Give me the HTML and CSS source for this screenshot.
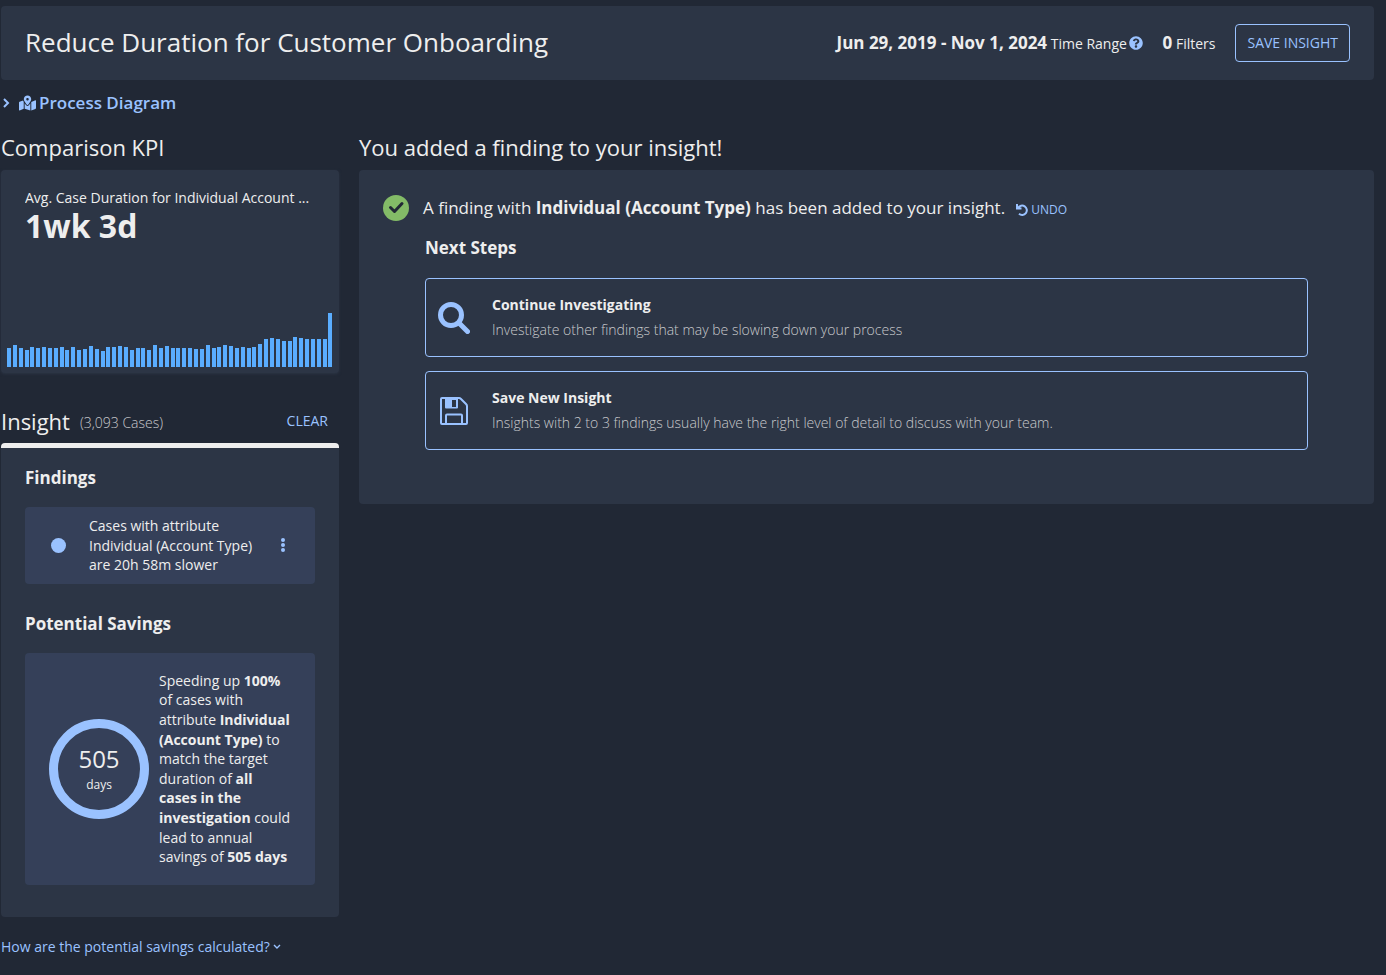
FILE: index.html
```html
<!DOCTYPE html>
<html lang="en">
<head>
<meta charset="utf-8">
<meta name="viewport" content="width=device-width, initial-scale=1">
<title>Reduce Duration for Customer Onboarding</title>
<link rel="stylesheet" href="styles.css">
</head>
<body>
<header class="topbar">
  <h1 class="topbar-title">Reduce Duration for Customer Onboarding</h1>
  <div class="topbar-meta">
    <div class="meta-item"><strong>Jun 29, 2019 - Nov 1, 2024</strong> Time Range
      <button class="icon-button help" type="button" aria-label="Time range help"><svg viewBox="0 0 512 512" width="14" height="14"><path d="M504 256c0 137-111 248-248 248S8 393 8 256 119 8 256 8s248 111 248 248zM262.700 90c-54.500 0-89.300 23-116.500 63.800-3.500 5.300-2.400 12.400 2.700 16.300l34.700 26.300c5.200 3.900 12.600 3 16.700-2.100 17.900-22.700 30.100-35.800 57.300-35.800 20.400 0 45.700 13.100 45.700 33 0 15-12.400 22.700-32.500 34C247.100 238.500 216 254.900 216 296v4c0 6.600 5.400 12 12 12h56c6.600 0 12-5.400 12-12v-1.300c0-28.500 83.200-29.600 83.200-106.700 0-58-60.200-102-116.500-102zM256 338c-25.400 0-46 20.600-46 46s20.600 46 46 46 46-20.600 46-46-20.600-46-46-46z"/></svg></button>
    </div>
    <div class="meta-item"><strong>0</strong> Filters</div>
    <button class="save-button" type="button">SAVE INSIGHT</button>
  </div>
</header>

<button class="process-toggle" type="button" aria-expanded="false">
  <svg class="chevron" viewBox="0 0 8 10" width="8" height="10"><path d="M2 1l4 4-4 4"/></svg>
  <svg class="map-icon" viewBox="0 0 576 512" width="17" height="16"><path d="M288 0c-69.600 0-126 56.400-126 126 0 56.300 82.400 158.800 113.900 196 6.400 7.500 17.800 7.500 24.200 0C331.600 284.800 414 182.300 414 126 414 56.400 357.600 0 288 0zm0 168c-23.200 0-42-18.800-42-42s18.800-42 42-42 42 18.800 42 42-18.800 42-42 42zM20.100 216A32 32 0 0 0 0 245.700v250.300c0 11.300 11.400 19.100 21.900 14.900L160 448V214.900c-8.800-16-16.100-31.500-21.300-46.400L20.100 216zM288 359.700c-14.100 0-27.400-6.200-36.500-17-19.700-23.200-40.600-49.600-59.500-76.700v182l192 64V266c-18.900 27.100-39.900 53.500-59.500 76.700-9.200 10.800-22.500 17-36.500 17zm266.100-198.500L416 224v288l139.900-56A32 32 0 0 0 576 426.300V176c0-11.300-11.400-19.100-21.900-14.800z"/></svg>
  <span>Process Diagram</span>
</button>

<div class="columns">
  <aside class="sidebar">
    <h2 class="section-title">Comparison KPI</h2>
    <section class="kpi-card">
      <div class="kpi-text">
        <div class="kpi-label">Avg. Case Duration for Individual Account ...</div>
        <div class="kpi-value">1wk 3d</div>
      </div>
      <div class="kpi-chart" role="img" aria-label="Average case duration over time">
        <i style="height:19px"></i><i style="height:22px"></i><i style="height:19px"></i><i style="height:17px"></i><i style="height:20px"></i><i style="height:19px"></i><i style="height:20px"></i><i style="height:19px"></i>
        <i style="height:19px"></i><i style="height:20px"></i><i style="height:17px"></i><i style="height:20px"></i><i style="height:17px"></i><i style="height:18px"></i><i style="height:21px"></i><i style="height:18px"></i>
        <i style="height:16px"></i><i style="height:20px"></i><i style="height:20px"></i><i style="height:21px"></i><i style="height:20px"></i><i style="height:17px"></i><i style="height:19px"></i><i style="height:19px"></i>
        <i style="height:17px"></i><i style="height:22px"></i><i style="height:19px"></i><i style="height:21px"></i><i style="height:19px"></i><i style="height:19px"></i><i style="height:19px"></i><i style="height:19px"></i>
        <i style="height:18px"></i><i style="height:18px"></i><i style="height:22px"></i><i style="height:19px"></i><i style="height:20px"></i><i style="height:22px"></i><i style="height:21px"></i><i style="height:19px"></i>
        <i style="height:20px"></i><i style="height:19px"></i><i style="height:20px"></i><i style="height:23px"></i><i style="height:28px"></i><i style="height:29px"></i><i style="height:28px"></i><i style="height:26px"></i>
        <i style="height:26px"></i><i style="height:30px"></i><i style="height:29px"></i><i style="height:28px"></i><i style="height:28px"></i><i style="height:28px"></i><i style="height:28px"></i><i style="height:54px"></i>
      </div>
    </section>

    <div class="insight-head">
      <h2 class="section-title">Insight</h2>
      <span class="case-count">(3,093 Cases)</span>
      <button class="clear-button" type="button">CLEAR</button>
    </div>
    <section class="insight-card">
      <h3 class="sub-title">Findings</h3>
      <div class="finding">
        <span class="finding-dot"></span>
        <p class="finding-text">Cases with attribute Individual (Account Type) are 20h 58m slower</p>
        <button class="icon-button" type="button" aria-label="Finding options"><svg viewBox="0 0 4 14" width="4" height="14"><circle cx="2" cy="2" r="2"/><circle cx="2" cy="7" r="2"/><circle cx="2" cy="12" r="2"/></svg></button>
      </div>
      <h3 class="sub-title savings-title">Potential Savings</h3>
      <div class="savings">
        <div class="savings-ring"><span class="ring-value">505</span><span class="ring-unit">days</span></div>
        <p class="savings-text">Speeding up <b>100%</b> of cases with attribute <b>Individual (Account Type)</b> to match the target duration of <b>all cases in the investigation</b> could lead to annual savings of <b>505 days</b></p>
      </div>
    </section>
    <button class="explain-toggle" type="button" aria-expanded="false">How are the potential savings calculated?
      <svg class="chevron" viewBox="0 0 8 6" width="8" height="6"><path d="M1 1l3 3 3-3"/></svg>
    </button>
  </aside>

  <main class="content">
    <h2 class="section-title">You added a finding to your insight!</h2>
    <section class="result-card">
      <div class="result-line">
        <svg class="check" viewBox="0 0 26 26" width="26" height="26"><circle cx="13" cy="13" r="13"/><path d="M7.500 12.500l4 4 7.500-8"/></svg>
        <p class="result-text">A finding with <b>Individual (Account Type)</b> has been added to your insight.</p>
        <button class="undo-button" type="button"><svg viewBox="0 0 12 12" width="12" height="12"><path class="undo-arc" d="M1 0v4.500h4.500M2 4A4.700 4.700 0 1 1 3 9.800"/></svg>UNDO</button>
      </div>
      <div class="steps">
        <h3 class="sub-title">Next Steps</h3>
        <button class="step" type="button">
          <svg viewBox="0 0 32 32" width="32" height="32"><circle class="lens" cx="13" cy="13" r="10.500"/><path class="handle" d="M21 21l8.500 8.500"/></svg>
          <span class="step-body"><strong>Continue Investigating</strong><span class="step-note">Investigate other findings that may be slowing down your process</span></span>
        </button>
        <button class="step" type="button">
          <svg viewBox="0 0 32 32" width="32" height="32"><path class="disk" d="M4 3h17q1 0 2 1l5 5q1 1 1 2v17q0 1-1 1H4q-1 0-1-1V4q0-1 1-1zM8 29v-8.500q0-1 1-1h14q1 0 1 1V29"/><path class="disk-fill" d="M7 2h13v10.500q0 1-1 1H8q-1 0-1-1zM14 5v7h4V5z"/></svg>
          <span class="step-body"><strong>Save New Insight</strong><span class="step-note">Insights with 2 to 3 findings usually have the right level of detail to discuss with your team.</span></span>
        </button>
      </div>
    </section>
  </main>
</div>
</body>
</html>
```
FILE: styles.css
```css
* { box-sizing: border-box; }

body {
  margin: 0;
  padding: 6px 12px 16px 1px;
  background: #212835;
  color: #eee;
  font: 14px/1.4 "Open Sans", sans-serif;
}

h1, h2, h3, p { margin: 0; }

button {
  padding: 0;
  border: 0;
  background: none;
  color: #9ac2ff;
  font: inherit;
  cursor: pointer;
}

svg { display: block; flex: none; fill: #9ac2ff; }

.chevron { fill: none; stroke: #9ac2ff; stroke-width: 2; }

.icon-button { display: inline-flex; }

.topbar {
  display: flex;
  align-items: center;
  justify-content: space-between;
  min-height: 74px;
  padding: 0 24px;
  border-radius: 4px;
  background: #2c3545;
}

.topbar-title { padding-bottom: 2px; font-size: 26px; font-weight: 400; }
.topbar-meta { display: flex; align-items: center; gap: 20px; }
.meta-item strong { font-size: 17px; }
.help { vertical-align: -1px; margin-left: -2px; }

.save-button {
  height: 38px;
  padding: 0 11px;
  border: 1px solid #9ac2ff;
  border-radius: 4px;
  font-weight: 500;
}

.process-toggle {
  display: flex;
  align-items: center;
  margin-top: 11px;
  padding-left: 1px;
  font-size: 17px;
  font-weight: 600;
  line-height: 24px;
}

.map-icon { margin: 0 3px 0 9px; }

.columns { display: flex; gap: 20px; margin-top: 16px; }
.sidebar { flex: 0 0 338px; min-width: 0; }
.content { flex: 1; min-width: 0; }

.section-title { font-size: 22px; font-weight: 400; line-height: 32px; }
.sub-title { font-size: 17px; font-weight: 700; line-height: 24px; }

.kpi-card {
  display: flex;
  flex-direction: column;
  justify-content: space-between;
  min-height: 203px;
  margin-top: 7px;
  padding: 18px 6px 6px;
  border-radius: 4px;
  background: #2c3545;
  box-shadow: 0 1px 3px #2c3545;
}

.kpi-text { padding: 0 18px; }
.kpi-label { overflow: hidden; white-space: nowrap; text-overflow: ellipsis; }
.kpi-value { font-size: 32px; font-weight: 700; line-height: 36px; }

.kpi-chart { display: flex; align-items: flex-end; justify-content: space-between; }
.kpi-chart i { width: 4px; background: #5aadff; }

.insight-head { display: flex; align-items: center; margin-top: 32px; padding-right: 11px; }
.case-count { margin: 4px 0 0 10px; color: #c8c9cc; font-weight: 300; }
.clear-button { margin-left: auto; font-weight: 500; }

.insight-card {
  margin-top: 6px;
  padding: 18px 24px 32px;
  border-top: 5px solid #eee;
  border-radius: 4px;
  background: #2c3545;
}

.finding {
  display: flex;
  align-items: center;
  margin-top: 17px;
  padding: 9px 30px 9px 26px;
  border-radius: 4px;
  background: #354059;
}

.finding-dot { flex: none; width: 15px; height: 15px; border-radius: 50%; background: #9ac2ff; }
.finding-text { flex: 1; margin: 0 24px 0 23px; }

.savings-title { margin-top: 28px; }

.savings {
  display: flex;
  align-items: center;
  gap: 10px;
  margin-top: 17px;
  padding: 18px 24px;
  border-radius: 4px;
  background: #354059;
}

.savings-ring {
  display: flex;
  flex: none;
  flex-direction: column;
  align-items: center;
  justify-content: center;
  width: 100px;
  height: 100px;
  border: 9px solid #9ac2ff;
  border-radius: 50%;
}

.ring-value { font-size: 24px; line-height: 32px; }
.ring-unit { font-size: 12px; line-height: 20px; }

.explain-toggle { display: flex; align-items: center; gap: 3px; margin-top: 20px; }
.explain-toggle .chevron { stroke-width: 1.4; }

.result-card {
  margin-top: 7px;
  padding: 24px 66px 54px 24px;
  border-radius: 4px;
  background: #2c3545;
}

.result-line { display: flex; align-items: center; }
.check { fill: #83bb67; }
.check path { fill: none; stroke: #212835; stroke-width: 3; stroke-linecap: round; stroke-linejoin: round; }
.result-text { margin-left: 14px; font-size: 17px; line-height: 28px; }

.undo-button { display: flex; align-items: center; gap: 3px; margin: 4px 0 0 11px; font-size: 12px; font-weight: 500; }
.undo-arc { fill: none; stroke: #9ac2ff; stroke-width: 2; }

.steps { display: flex; flex-direction: column; gap: 14px; margin: 14px 0 0 42px; }
.steps .sub-title { margin-bottom: 4px; }

.step {
  display: flex;
  align-items: center;
  gap: 22px;
  min-height: 79px;
  padding: 8px 12px;
  border: 1px solid #9ac2ff;
  border-radius: 4px;
  text-align: left;
}

.step-body { display: flex; flex-direction: column; gap: 5px; color: #eee; }
.step-note { color: #c8c9cc; font-weight: 300; }

.lens { fill: none; stroke: #9ac2ff; stroke-width: 5; }
.handle { stroke: #9ac2ff; stroke-width: 5; stroke-linecap: round; }
.disk { fill: none; stroke: #9ac2ff; stroke-width: 2; }
.disk-fill { fill-rule: evenodd; }
```
